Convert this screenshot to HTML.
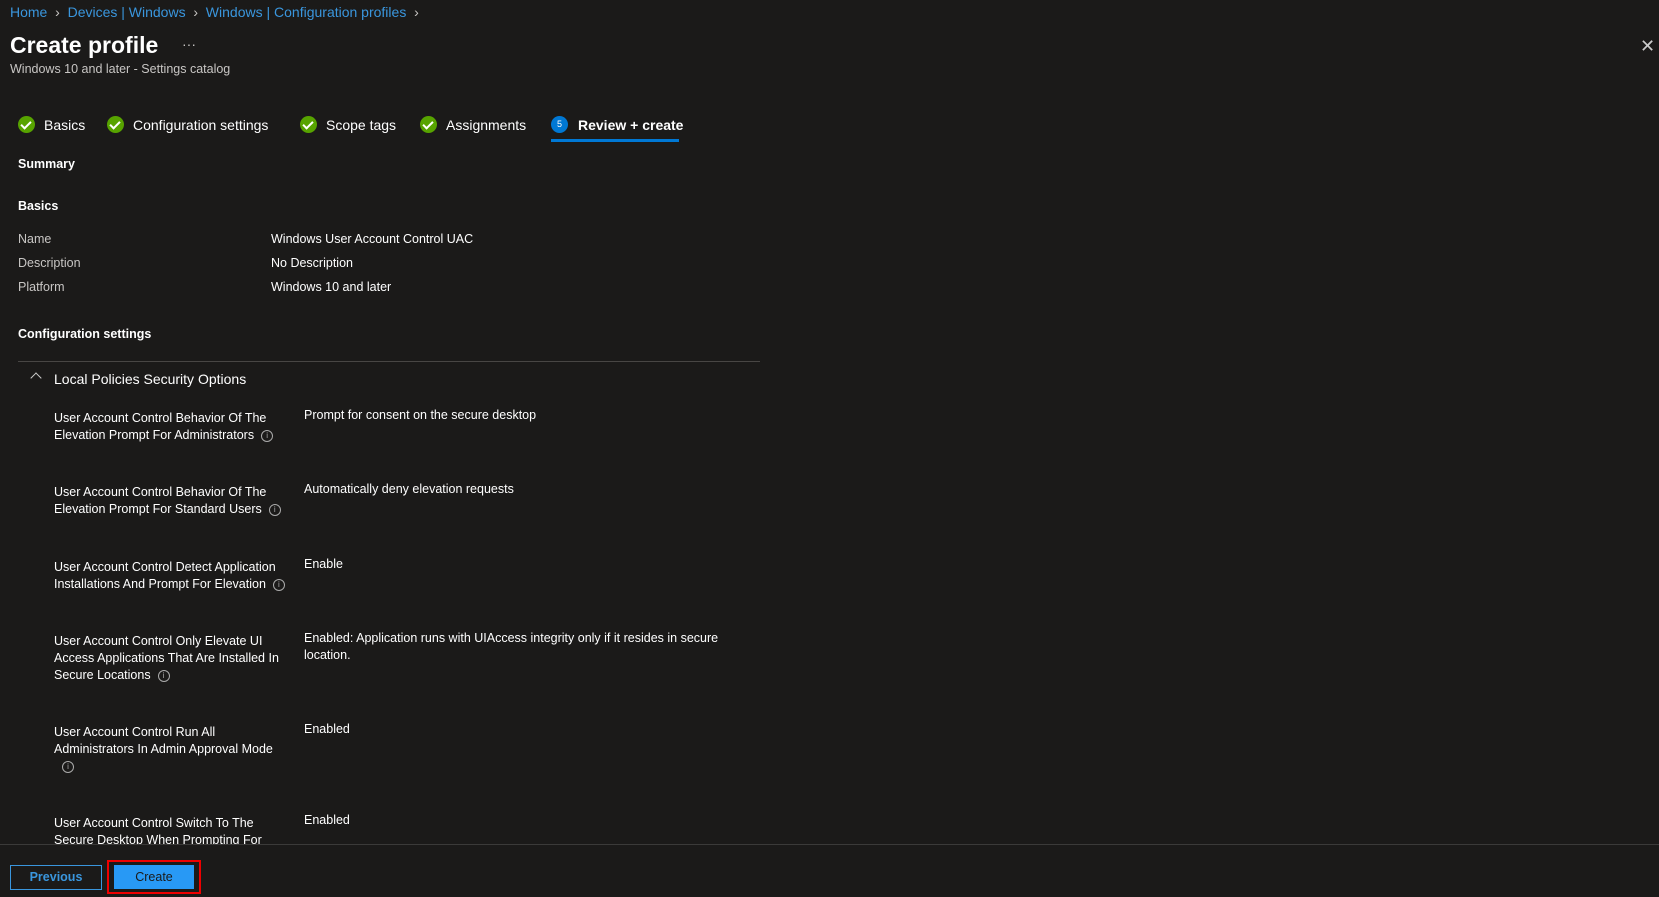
<!DOCTYPE html>
<html><head><style>
body{margin:0;width:1659px;height:896px;background:#1b1a19;color:#fff;font-family:"Liberation Sans",sans-serif;font-size:12.5px;position:relative;overflow:hidden}
.a{position:absolute;white-space:nowrap}
.bc{color:#3a96dd;font-size:14px}
.g{color:#c8c6c4}
.b{font-weight:bold}
.ck{position:absolute;width:17px;height:17px;border-radius:50%;background:#57a300;top:116px}
.ck:after{content:"";position:absolute;left:5px;top:3px;width:4px;height:8px;border:solid #fff;border-width:0 2px 2px 0;transform:rotate(45deg)}
.tab{position:absolute;top:117px;font-size:14px}
.i{display:inline-block;width:10px;height:10px;border:1px solid #aaa;border-radius:50%;font-size:8px;line-height:10px;text-align:center;color:#aaa;margin-left:7px;vertical-align:middle}
.lb{position:absolute;left:54px;line-height:17px;width:250px}
.v{position:absolute;left:304px;line-height:17px}
</style></head><body>
<div class="a bc" style="left:10px;top:4px">Home <span class="g">&nbsp;›&nbsp;</span> Devices | Windows <span class="g">&nbsp;›&nbsp;</span> Windows | Configuration profiles <span class="g">&nbsp;›</span></div>
<div class="a" style="left:10px;top:32px;font-size:23px;font-weight:bold">Create profile</div>
<div class="a g" style="left:182px;top:36px;font-size:14px">···</div>
<div class="a g" style="left:10px;top:62px;font-size:12.5px">Windows 10 and later - Settings catalog</div>
<div class="a" style="left:1640px;top:36px;font-size:18px;color:#ccc">✕</div>
<div class="ck" style="left:18px"></div><div class="tab" style="left:44px">Basics</div>
<div class="ck" style="left:107px"></div><div class="tab" style="left:133px">Configuration settings</div>
<div class="ck" style="left:300px"></div><div class="tab" style="left:326px">Scope tags</div>
<div class="ck" style="left:420px"></div><div class="tab" style="left:446px">Assignments</div>
<div class="a" style="left:551px;top:116px;width:17px;height:17px;border-radius:50%;background:#0078d4;font-size:9px;line-height:17px;text-align:center">5</div>
<div class="tab b" style="left:578px">Review + create</div>
<div class="a" style="left:551px;top:139px;width:128px;height:3px;background:#0078d4"></div>
<div class="a b" style="left:18px;top:157px">Summary</div>
<div class="a b" style="left:18px;top:199px">Basics</div>
<div class="a g" style="left:18px;top:232px">Name</div><div class="a" style="left:271px;top:232px">Windows User Account Control UAC</div>
<div class="a g" style="left:18px;top:256px">Description</div><div class="a" style="left:271px;top:256px">No Description</div>
<div class="a g" style="left:18px;top:280px">Platform</div><div class="a" style="left:271px;top:280px">Windows 10 and later</div>
<div class="a b" style="left:18px;top:327px">Configuration settings</div>
<div class="a" style="left:18px;top:361px;width:742px;height:1px;background:#484644"></div>
<div class="a" style="left:32px;top:374px;width:7px;height:7px;border-left:1.5px solid #ccc;border-top:1.5px solid #ccc;transform:rotate(45deg)"></div>
<div class="a" style="left:54px;top:371px;font-size:14px">Local Policies Security Options</div>
<div class="lb" style="top:410px">User Account Control Behavior Of The<br>Elevation Prompt For Administrators<span class="i">i</span></div>
<div class="v" style="top:407px">Prompt for consent on the secure desktop</div>
<div class="lb" style="top:484px">User Account Control Behavior Of The<br>Elevation Prompt For Standard Users<span class="i">i</span></div>
<div class="v" style="top:481px">Automatically deny elevation requests</div>
<div class="lb" style="top:559px">User Account Control Detect Application<br>Installations And Prompt For Elevation<span class="i">i</span></div>
<div class="v" style="top:556px">Enable</div>
<div class="lb" style="top:633px">User Account Control Only Elevate UI<br>Access Applications That Are Installed In<br>Secure Locations<span class="i">i</span></div>
<div class="v" style="top:630px">Enabled: Application runs with UIAccess integrity only if it resides in secure<br>location.</div>
<div class="lb" style="top:724px">User Account Control Run All<br>Administrators In Admin Approval Mode<br><span class="i" style="margin-left:8px">i</span></div>
<div class="v" style="top:721px">Enabled</div>
<div class="lb" style="top:815px">User Account Control Switch To The<br>Secure Desktop When Prompting For</div>
<div class="v" style="top:812px">Enabled</div>
<div class="a" style="left:0;top:844px;width:1659px;height:52px;background:#1b1a19;border-top:1px solid #3b3a39"></div>
<div class="a b" style="left:10px;top:865px;width:90px;height:23px;border:1px solid #3a96dd;color:#3a96dd;text-align:center;line-height:23px">Previous</div>
<div class="a" style="left:107px;top:860px;width:90px;height:30px;border:2px solid #e00"></div>
<div class="a" style="left:114px;top:865px;width:80px;height:24px;background:#2899f5;color:#1b1a19;text-align:center;line-height:24px">Create</div>
</body></html>
